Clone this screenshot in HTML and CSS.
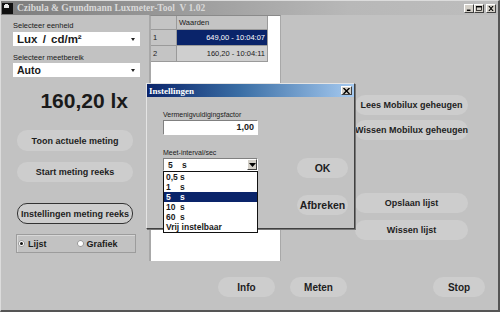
FILE: index.html
```html
<!DOCTYPE html>
<html lang="nl">
<head>
    <meta charset="UTF-8">
    <title>Luxmeter-Tool</title>
    <link rel="stylesheet" href="styles.css">
</head>
<body>
    <div class="window">
        <div class="titlebar">
            <svg class="app-icon" width="11" height="11" viewBox="0 0 11 11">
                <rect x="0" y="0" width="11" height="11" fill="#101010"/>
                <rect x="2" y="2" width="5" height="3" fill="#e8e8e8"/>
                <rect x="3" y="1" width="3" height="1" fill="#e8e8e8"/>
            </svg>
            <span class="title">Czibula &amp; Grundmann Luxmeter-Tool&nbsp; V 1.02</span>
            <div class="caption-buttons">
                <span class="cap-btn"><svg width="8" height="7" viewBox="0 0 8 7"><rect x="1" y="5" width="5" height="2" fill="#000"/></svg></span>
                <span class="cap-btn"><svg width="8" height="7" viewBox="0 0 8 7"><rect x="0.5" y="0.5" width="7" height="6" fill="none" stroke="#000"/><rect x="0" y="0" width="8" height="2" fill="#000"/></svg></span>
                <span class="cap-btn close"><svg width="8" height="7" viewBox="0 0 8 7"><path d="M1 0 L7 7 M7 0 L1 7" stroke="#000" stroke-width="1.6"/></svg></span>
            </div>
        </div>

        <div class="client">
            <div class="main">
                <!-- left: unit, range, reading and actions -->
                <div class="left">
                    <div class="field-label">Selecteer eenheid</div>
                    <div class="select first"><span>Lux / cd/m²</span><span class="caret"></span></div>
                    <div class="field-label second">Selecteer meetbereik</div>
                    <div class="select"><span>Auto</span><span class="caret"></span></div>
                    <div class="reading">160,20 lx</div>
                    <button class="pill side toon">Toon actuele meting</button>
                    <button class="pill side start">Start meting reeks</button>
                    <button class="pill side focused">Instellingen meting reeks</button>
                    <div class="radio-group">
                        <span class="radio checked"></span><span class="radio-label">Lijst</span>
                        <span class="radio grafiek"></span><span class="radio-label">Grafiek</span>
                    </div>
                </div>

                <!-- values grid -->
                <div class="grid">
                    <table class="values">
                        <tr><th class="rowhead"></th><th class="colhead">Waarden</th></tr>
                        <tr><td class="rowhead">1</td><td class="value selected">649,00 - 10:04:07</td></tr>
                        <tr><td class="rowhead">2</td><td class="value">160,20 - 10:04:11</td></tr>
                    </table>
                </div>

                <!-- right: memory and list actions -->
                <div class="right">
                    <button class="pill wide">Lees Mobilux geheugen</button>
                    <button class="pill wide mem-clear">Wissen Mobilux geheugen</button>
                    <button class="pill wide save">Opslaan lijst</button>
                    <button class="pill wide list-clear">Wissen lijst</button>
                </div>
            </div>

            <div class="bottom">
                <button class="pill bottom-btn info">Info</button>
                <button class="pill bottom-btn meten">Meten</button>
                <button class="pill bottom-btn stop">Stop</button>
            </div>
        </div>

        <!-- settings dialog, open over the main window -->
        <div class="dialog">
            <div class="dlg-title">
                <span>Instellingen</span>
                <span class="dlg-close"><svg width="7" height="6" viewBox="0 0 7 6"><path d="M0.5 0 L6.5 6 M6.5 0 L0.5 6" stroke="#000" stroke-width="1.4"/></svg></span>
            </div>
            <div class="dlg-body">
                <div class="dlg-form">
                    <div class="dlg-label">Vermenigvuldigingsfactor</div>
                    <div class="textbox">1,00</div>
                    <div class="dlg-label second">Meet-interval/sec</div>
                    <div class="combo">
                        <span class="opt"><span class="num">5</span>s</span>
                        <span class="combo-btn"><svg width="7" height="4" viewBox="0 0 7 4"><path d="M0 0 H7 L3.5 4 Z" fill="#000"/></svg></span>
                        <div class="combo-list">
                            <div class="opt"><span class="num">0,5</span>s</div>
                            <div class="opt"><span class="num">1</span>s</div>
                            <div class="opt active"><span class="num">5</span>s</div>
                            <div class="opt"><span class="num">10</span>s</div>
                            <div class="opt"><span class="num">60</span>s</div>
                            <div class="opt">Vrij instelbaar</div>
                        </div>
                    </div>
                </div>
                <div class="dlg-buttons">
                    <button class="pill dlg-btn">OK</button>
                    <button class="pill dlg-btn cancel">Afbreken</button>
                </div>
            </div>
        </div>
    </div>
</body>
</html>
```

FILE: styles.css
```css
html, body {
    margin: 0;
    padding: 0;
    background: #c2c2c2;
}
.window {
    position: relative;
    width: 500px;
    height: 312px;
    box-sizing: border-box;
    background: #c2c2c2;
    border-top: 1px solid #dcdcdc;
    border-left: 1px solid #dcdcdc;
    border-right: 2px solid #555;
    border-bottom: 2px solid #555;
    font-family: "Liberation Sans", Arial, sans-serif;
    color: #1a1a1a;
    overflow: hidden;
}

/* title bar (inactive, the dialog has focus) */
.titlebar {
    height: 14px;
    display: flex;
    align-items: center;
    padding: 0 2px 0 1px;
    background: linear-gradient(to right, #7c7c7c, #b8b8b8 70%, #bdbdbd);
}
.app-icon {
    flex: none;
}
.title {
    margin-left: 4px;
    font-family: "Liberation Serif", "Times New Roman", serif;
    font-weight: bold;
    font-size: 9.5px;
    color: #d9d9d9;
    white-space: nowrap;
}
.caption-buttons {
    margin-left: auto;
    display: flex;
}
.cap-btn {
    width: 10px;
    height: 9px;
    box-sizing: border-box;
    display: flex;
    align-items: center;
    justify-content: center;
    background: #d4d0c8;
    border: 1px solid;
    border-color: #fff #404040 #404040 #fff;
}
.cap-btn svg {
    width: 6px;
    height: 5px;
}
.cap-btn.close {
    margin-left: 2px;
}

/* client */
.client {
    display: flex;
    flex-direction: column;
}
.main {
    display: flex;
    height: 246px;
}
.left {
    margin-left: 12px;
    width: 127px;
    padding-top: 7px;
    display: flex;
    flex-direction: column;
}
.field-label {
    font-size: 7.5px;
    line-height: 8px;
    height: 8px;
    margin-bottom: 2px;
}
.field-label.second {
    margin-top: 8px;
    margin-bottom: 1px;
}
.select {
    height: 14px;
    box-sizing: border-box;
    background: #fff;
    display: flex;
    align-items: center;
    padding: 0 5px 0 4px;
    font-weight: bold;
    font-size: 10.5px;
}
.select.first {
    font-size: 11.5px;
    word-spacing: 2px;
}
.select span:first-child {
    flex: 1;
}
.caret {
    width: 0;
    height: 0;
    border-left: 2px solid transparent;
    border-right: 2px solid transparent;
    border-top: 3px solid #222;
}
.reading {
    margin-top: 13px;
    height: 21px;
    line-height: 21px;
    font-size: 21px;
    font-weight: bold;
    text-align: right;
    padding-right: 12px;
}

/* pill buttons */
.pill {
    font-family: "Liberation Sans", Arial, sans-serif;
    font-weight: bold;
    font-size: 9px;
    color: #1e1e1e;
    background: #cdcdcd;
    border: none;
    border-radius: 10px;
    height: 20px;
    padding: 0;
    white-space: nowrap;
    box-sizing: border-box;
}
.pill.side {
    margin-left: 4px;
    width: 116px;
    height: 21px;
}
.pill.toon {
    margin-top: 19px;
}
.pill.start {
    margin-top: 11px;
    height: 20px;
}
.pill.focused {
    margin-top: 21px;
    border: 1px solid #333;
}

.radio-group {
    margin-top: 10px;
    margin-left: 3px;
    width: 120px;
    height: 19px;
    box-sizing: border-box;
    border: 1px solid #9c9c9c;
    box-shadow: inset 1px 1px 0 #d8d8d8;
    display: flex;
    align-items: center;
    padding-left: 1px;
    font-size: 9px;
    font-weight: bold;
}
.radio {
    width: 7px;
    height: 7px;
    border-radius: 50%;
    background: #fff;
    box-shadow: inset 0 0 0 1px #999;
    position: relative;
}
.radio.checked::after {
    content: "";
    position: absolute;
    left: 2px;
    top: 2px;
    width: 3px;
    height: 3px;
    border-radius: 50%;
    background: #111;
}
.radio-label {
    margin-left: 3px;
}
.radio.grafiek {
    margin-left: 30px;
}

/* values grid */
.grid {
    margin-left: 9px;
    width: 132px;
    height: 246px;
    box-sizing: border-box;
    background: #fff;
    border-top: 1px solid #8a8a8a;
    border-left: 2px solid #a8a8a8;
    border-right: 1px solid #a8a8a8;
}
.values {
    border-collapse: collapse;
    font-size: 7.5px;
}
.values th, .values td {
    border: 1px solid #9a9a9a;
    padding: 0 2px;
    font-weight: normal;
}
.values tr:first-child th {
    height: 13px;
    border-top: none;
}
.values td {
    height: 15px;
}
.rowhead {
    width: 21px;
    background: #c4c4c4;
    border-left: none !important;
    text-align: left;
}
.colhead {
    width: 86px;
    background: #c4c4c4;
    text-align: left;
}
.value {
    text-align: right;
    background: #cfcfcf;
}
.value.selected {
    background: #0a246a;
    color: #fff;
}

/* right column */
.right {
    margin-left: 74px;
    width: 113px;
    padding-top: 80px;
    display: flex;
    flex-direction: column;
}
.pill.wide {
    width: 113px;
}
.pill.mem-clear {
    margin-top: 5px;
}
.pill.save {
    margin-top: 53px;
}
.pill.list-clear {
    margin-top: 7px;
}

/* bottom row */
.bottom {
    display: flex;
    margin-top: 16px;
}
.pill.bottom-btn {
    font-size: 10px;
    width: 57px;
}
.pill.info {
    margin-left: 217px;
}
.pill.meten {
    margin-left: 15px;
}
.pill.stop {
    margin-left: 86px;
    width: 52px;
}

/* dialog */
.dialog {
    position: absolute;
    left: 145px;
    top: 82px;
    width: 209px;
    height: 146px;
    box-sizing: border-box;
    background: #c2c2c2;
    border: 1px solid;
    border-color: #e4e4e4 #404040 #404040 #e4e4e4;
    box-shadow: 1px 1px 0 #777;
}
.dlg-title {
    height: 13px;
    display: flex;
    align-items: center;
    padding: 0 2px;
    background: linear-gradient(to right, #0a246a, #3a6ea5 45%, #a6caf0);
    font-family: "Liberation Serif", "Times New Roman", serif;
    font-weight: bold;
    font-size: 9px;
    color: #fff;
}
.dlg-close {
    margin-left: auto;
    width: 11px;
    height: 9px;
    box-sizing: border-box;
    display: flex;
    align-items: center;
    justify-content: center;
    background: #d4d0c8;
    border: 1px solid;
    border-color: #fff #404040 #404040 #fff;
}
.dlg-body {
    display: flex;
}
.dlg-form {
    margin-left: 16px;
    width: 95px;
    display: flex;
    flex-direction: column;
}
.dlg-label {
    margin-top: 13px;
    height: 9px;
    line-height: 9px;
    font-size: 7px;
}
.textbox {
    margin-top: 1px;
    height: 15px;
    box-sizing: border-box;
    background: #fff;
    border: 1px solid;
    border-color: #808080 #fff #fff #808080;
    text-align: right;
    font-weight: bold;
    font-size: 9px;
    line-height: 13px;
    padding-right: 3px;
}
.combo {
    position: relative;
    margin-top: 1px;
    height: 13px;
    box-sizing: border-box;
    background: #fff;
    border: 1px solid;
    border-color: #808080 #fff #fff #808080;
    display: flex;
    align-items: center;
    font-size: 8.5px;
    font-weight: bold;
}
.combo > .opt {
    flex: 1;
    padding-left: 4px;
}
.combo-btn {
    width: 10px;
    height: 11px;
    box-sizing: border-box;
    display: flex;
    align-items: center;
    justify-content: center;
    background: #d4d0c8;
    border: 1px solid;
    border-color: #fff #404040 #404040 #fff;
}
.combo-list {
    position: absolute;
    left: -1px;
    top: 12px;
    width: 95px;
    height: 62px;
    box-sizing: border-box;
    background: #fff;
    border: 1px solid #111;
}
.opt {
    display: flex;
    height: 10px;
    line-height: 10px;
    padding-left: 2px;
}
.num {
    width: 14px;
}
.opt.active {
    background: #0a246a;
    color: #fff;
}
.dlg-buttons {
    margin-left: 39px;
    display: flex;
    flex-direction: column;
    padding-top: 61px;
}
.pill.dlg-btn {
    width: 51px;
    font-size: 10.5px;
}
.pill.cancel {
    margin-top: 17px;
}
```
